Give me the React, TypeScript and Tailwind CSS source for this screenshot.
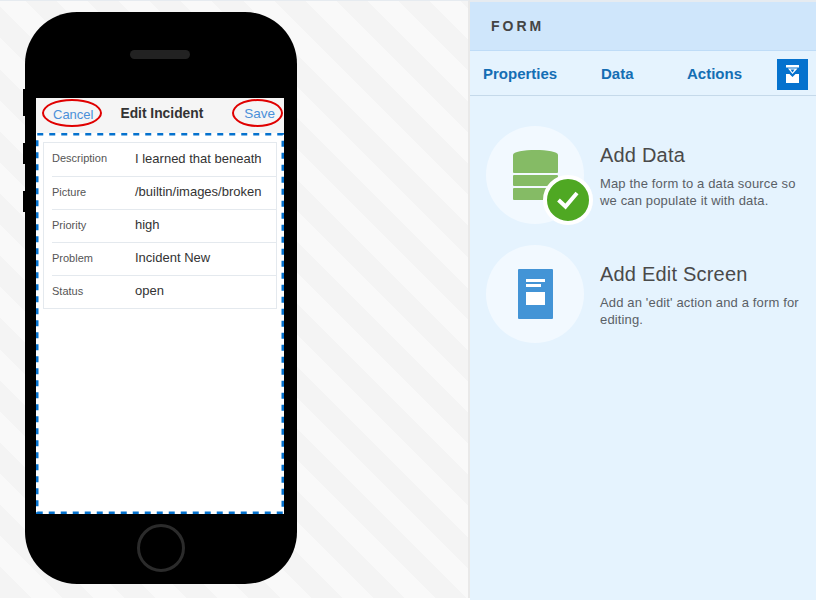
const fields = [
  { label: 'Description', value: 'I learned that beneath' },
  { label: 'Picture', value: '/builtin/images/broken' },
  { label: 'Priority', value: 'high' },
  { label: 'Problem', value: 'Incident New' },
  { label: 'Status', value: 'open' },
];

function Ellipse({ className }: { className: string }) {
  return <div className={`absolute rounded-[50%] border-2 border-[#e00000] ${className}`} />;
}

function Phone() {
  return (
    <div className="relative flex h-[572px] w-[272px] flex-col items-center rounded-[52px] bg-black">
      <div className="absolute left-[-2px] top-[77px] h-[27px] w-[2px] bg-black" />
      <div className="absolute left-[-2px] top-[131px] h-[21px] w-[2px] bg-black" />
      <div className="absolute left-[-2px] top-[179px] h-[21px] w-[2px] bg-black" />
      <div className="mr-[2px] mt-[38px] h-[9px] w-[60px] rounded-full bg-[#222222]" />
      <div className="relative mr-[2px] mt-[39px] flex h-[416px] w-[248px] flex-col bg-white">
        <div className="flex h-[35px] items-center bg-[#f5f5f5] pb-[2px] pl-[17px] pr-[9px]">
          <span className="text-[13px] text-[#4a90d9]">Cancel</span>
          <span className="ml-[27px] text-[13.8px] font-bold text-[#333333]">Edit Incident</span>
          <span className="ml-auto text-[13.5px] text-[#4a90d9]">Save</span>
        </div>
        <Ellipse className="left-[6px] top-[1px] h-[28px] w-[60px]" />
        <Ellipse className="left-[196px] top-[1px] h-[28px] w-[51px]" />
        <div className="relative flex-1 px-[7px] pt-[9px]">
          {/* selection outline: css dashes come out too dense */}
          <svg className="absolute inset-0" width="248" height="381">
            <rect x="1.250" y="1.250" width="245.500" height="378.500" fill="none" stroke="#0572ce" strokeWidth="2.500" strokeDasharray="6 6" />
          </svg>
          <div className="border border-[#e4e9ee] pl-2">
            {fields.map((field, index) => (
              <div
                key={field.label}
                className={`flex h-[33px] items-center pb-[2px] ${index > 0 ? 'border-t border-[#e4e9ee]' : ''}`}
              >
                <span className="w-[83px] shrink-0 text-[11px] text-[#555555]">{field.label}</span>
                <span className="whitespace-nowrap text-[13px] text-[#333333]">{field.value}</span>
              </div>
            ))}
          </div>
        </div>
      </div>
      <div className="mt-[10px] h-[48px] w-[48px] rounded-full border-[3px] border-[#2b2b2b]" />
    </div>
  );
}

function DataIcon() {
  return (
    <div className="relative flex h-[98px] w-[98px] shrink-0 items-center justify-center rounded-full bg-[#f2f9ff]">
      <svg width="45" height="50" viewBox="0 0 45 50">
        <path d="M0 5C0 1.500 11 0 22.500 0S45 1.500 45 5v17a1 1 0 0 1-1 1H1a1 1 0 0 1-1-1z" fill="#85bb65" />
        <rect y="25" width="45" height="11" rx="1" fill="#85bb65" />
        <rect y="38" width="45" height="12" rx="1" fill="#85bb65" />
      </svg>
      <div className="absolute left-[57px] top-[49px] flex h-[50px] w-[50px] items-center justify-center rounded-full border-4 border-white bg-[#4fa823]">
        <svg width="24" height="20" viewBox="0 0 24 20">
          <path d="M2.500 10l7 6.500L21 3" fill="none" stroke="white" strokeWidth="4" />
        </svg>
      </div>
    </div>
  );
}

function ScreenIcon() {
  return (
    <div className="flex h-[98px] w-[98px] shrink-0 items-center justify-center rounded-full bg-[#f2f9ff]">
      <svg width="35" height="50" viewBox="0 0 35 50">
        <rect width="35" height="50" rx="1" fill="#4394d6" />
        <rect x="8" y="10" width="19" height="3" fill="white" />
        <rect x="8" y="15" width="15" height="3" fill="white" />
        <rect x="8" y="23" width="19" height="13" fill="white" />
      </svg>
    </div>
  );
}

function Action({ icon, title, text }: { icon: React.ReactNode; title: string; text: string }) {
  return (
    <div className="flex gap-[16px]">
      {icon}
      <div className="w-[205px] pt-[16px]">
        <h3 className="whitespace-nowrap text-[20px] leading-[26px] tracking-[0.2px] text-[#4a4a4a]">{title}</h3>
        <p className="mt-[7px] text-[13px] leading-[17px] tracking-[0.15px] text-[#5a5f66]">{text}</p>
      </div>
    </div>
  );
}

export default function App() {
  return (
    <div className="flex h-[600px] w-[816px] overflow-hidden bg-white font-['Liberation_Sans',Arial,sans-serif]">
      <div className="h-[598px] w-[470px] border-r-2 border-t border-r-[#e9e9e9] border-t-[#e6ebf0] bg-[repeating-linear-gradient(45deg,#f4f4f4_0,#f4f4f4_22px,#f9f9f9_22px,#f9f9f9_44px)] pl-[25px] pt-[11px]">
        <Phone />
      </div>
      <div className="flex w-[346px] flex-col border-t-2 border-[#e6ebf0] bg-[#e5f3fe]">
        <div className="flex h-[49px] items-center border-b border-[#bfdcf7] bg-[#cfe6fb] pl-[21px] text-[14px] font-bold tracking-[3px] text-[#444444]">
          FORM
        </div>
        <div className="flex h-[45px] items-center border-b border-[#c5d9ea] pl-[13px] pt-[2px] text-[15px] font-bold text-[#146eb4]">
          <span className="w-[118px]">Properties</span>
          <span className="w-[86px]">Data</span>
          <span className="w-[90px]">Actions</span>
          <div className="flex h-[31px] w-[31px] items-center justify-center bg-[#0572ce]">
            <svg width="13" height="18" viewBox="0 0 13 18">
              <path d="M0 0h13v2.500H0zM2 3.500h9.500L6.500 9z" fill="white" />
              <path d="M4.500 4.500h4l-2 3z" fill="#0572ce" />
              <path d="M0 9h3.500l3 3 3-3H13v9H0z" fill="white" />
            </svg>
          </div>
        </div>
        <div className="flex flex-col gap-[21px] pl-[16px] pt-[30px]">
          <Action
            icon={<DataIcon />}
            title="Add Data"
            text="Map the form to a data source so we can populate it with data."
          />
          <Action
            icon={<ScreenIcon />}
            title="Add Edit Screen"
            text="Add an 'edit' action and a form for editing."
          />
        </div>
      </div>
    </div>
  );
}
